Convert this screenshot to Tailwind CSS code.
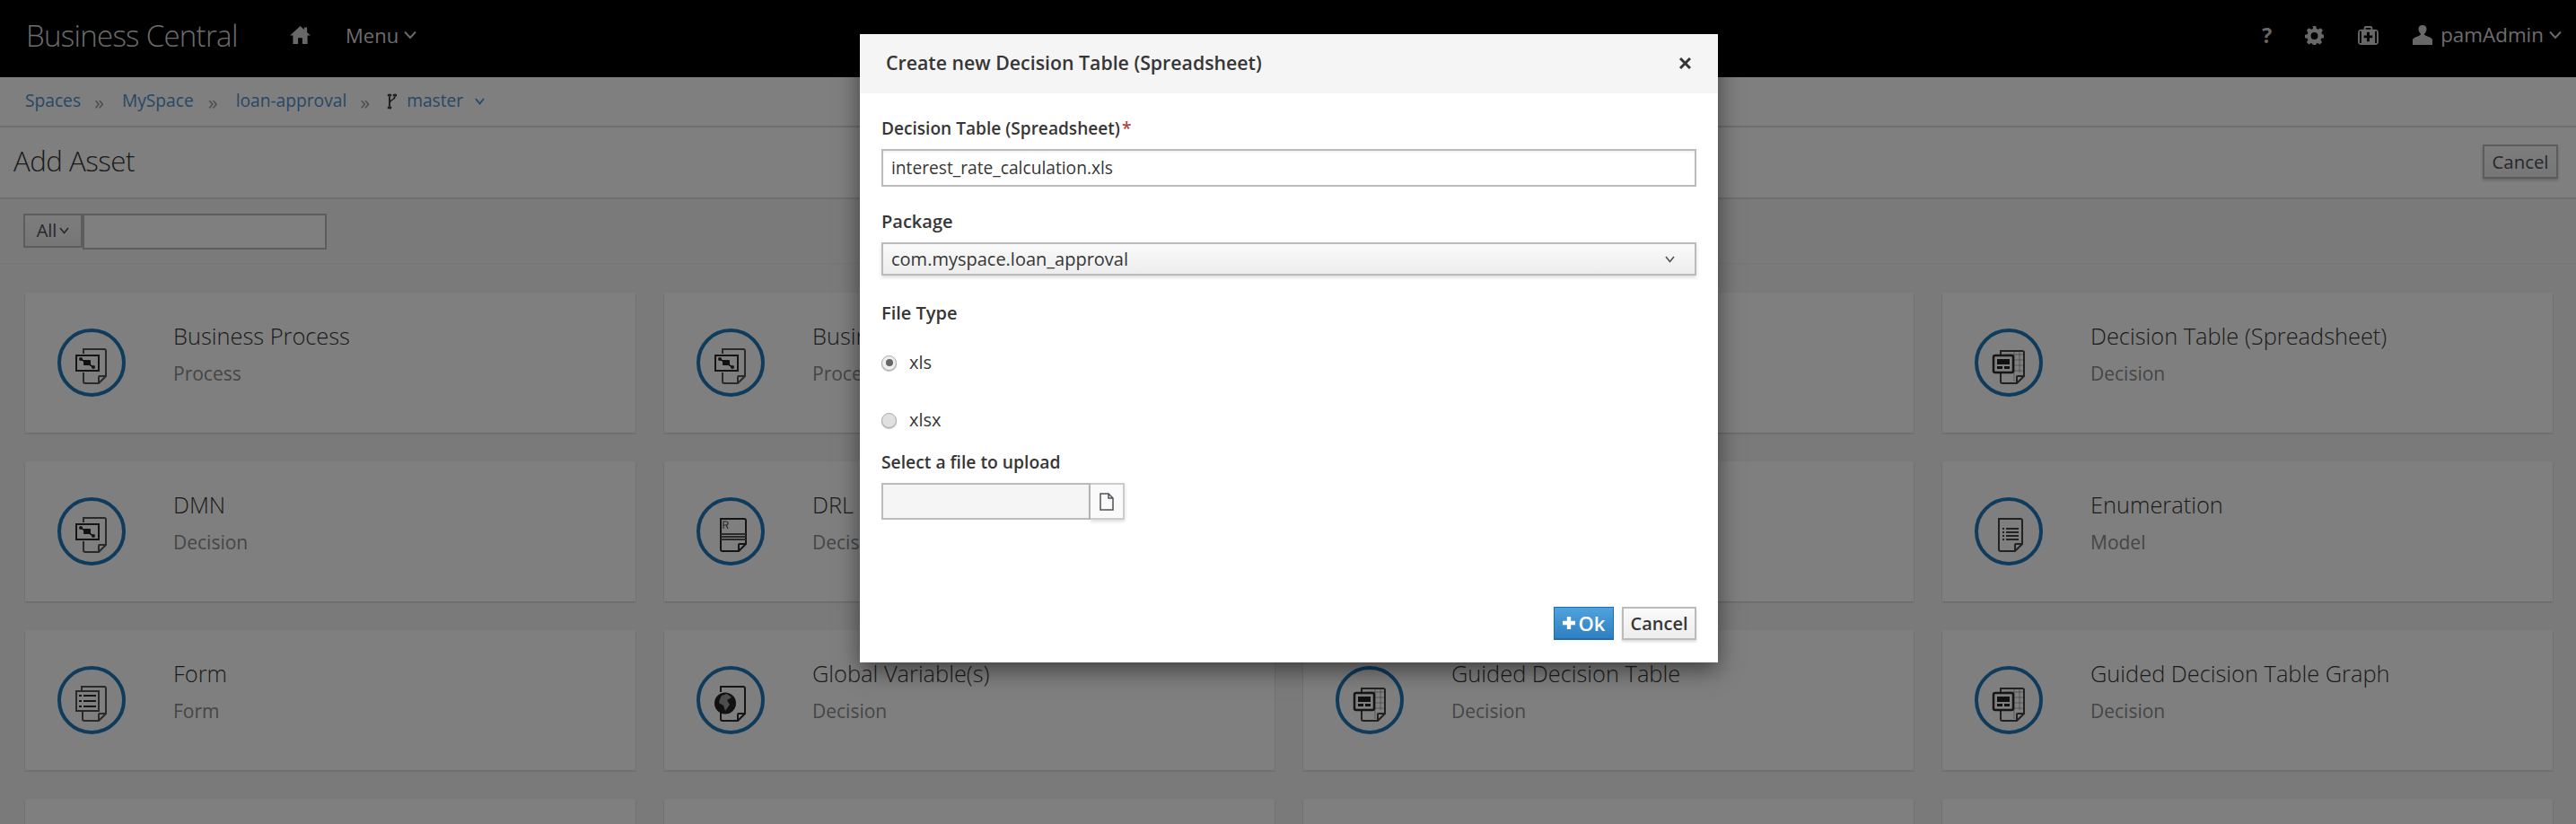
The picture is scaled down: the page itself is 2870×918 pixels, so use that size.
<!DOCTYPE html>
<html lang="en">
<head>
<meta charset="utf-8">
<title>Business Central</title>
<script src="https://cdn.jsdelivr.net/npm/@tailwindcss/browser@4"></script>
</head>
<body class="relative w-[2870px] h-[918px] overflow-hidden bg-[#f5f5f5] font-['Open_Sans',sans-serif] text-[#363636]">
<svg class="hidden" width="0" height="0">
  <defs>
    <symbol id="ic-process" viewBox="0 0 76 76">
      <path d="M29 28v-5h23a2 2 0 0 1 2 2v28l-8 8H31a2 2 0 0 1-2-2v-10" fill="none" stroke="#555" stroke-width="2"/>
      <path d="M54 53h-7a1 1 0 0 0-1 1v7" fill="none" stroke="#555" stroke-width="2"/>
      <rect x="21" y="30" width="25" height="17" fill="#fff" stroke="#2a2a2a" stroke-width="2"/>
      <path d="M26 34l14 9" stroke="#2a2a2a" stroke-width="1.500"/>
      <circle cx="26" cy="34" r="2" fill="#2a2a2a"/>
      <circle cx="40" cy="43" r="2" fill="#2a2a2a"/>
      <rect x="29" y="35" width="8" height="6" rx="1" fill="#222"/>
    </symbol>
    <symbol id="ic-drl" viewBox="0 0 76 76">
      <path d="M27 24h26a2 2 0 0 1 2 2v26l-8 8H29a2 2 0 0 1-2-2z" fill="none" stroke="#2a2a2a" stroke-width="2"/>
      <path d="M55 52h-7a1 1 0 0 0-1 1v7" fill="none" stroke="#2a2a2a" stroke-width="2"/>
      <path d="M30 35v-8h3a2 2 0 0 1 0 4h-3m3 0l2 4" fill="none" stroke="#555" stroke-width="1.200"/>
      <path d="M27 41h28M27 44h28M27 47h28" stroke="#555" stroke-width="2"/>
    </symbol>
    <symbol id="ic-table" viewBox="0 0 76 76">
      <path d="M34 29h20M44 25v34M44 35h10M44 41h10M44 47h10M50 25v24" stroke="#777" stroke-width="0.600"/>
      <path d="M29 29v-4h24a2 2 0 0 1 2 2v26l-8 8H31a2 2 0 0 1-2-2v-9" fill="none" stroke="#444" stroke-width="2"/>
      <path d="M55 53h-7a1 1 0 0 0-1 1v7" fill="none" stroke="#444" stroke-width="2"/>
      <rect x="21" y="30" width="22" height="19" rx="2" fill="#fff" stroke="#2a2a2a" stroke-width="2.500"/>
      <rect x="25" y="34" width="14" height="6" fill="#222"/>
      <rect x="25" y="42" width="6" height="3" fill="#222"/>
      <rect x="33" y="42" width="6" height="3" fill="#222"/>
    </symbol>
    <symbol id="ic-enum" viewBox="0 0 76 76">
      <path d="M27 24h24a2 2 0 0 1 2 2v26l-8 8H29a2 2 0 0 1-2-2z" fill="none" stroke="#444" stroke-width="2"/>
      <path d="M53 52h-7a1 1 0 0 0-1 1v7" fill="none" stroke="#444" stroke-width="2"/>
      <path d="M31 35h2M31 39h2M31 43h2M31 47h2" stroke="#444" stroke-width="2"/>
      <path d="M35 35h14M35 39h14M35 43h14M35 47h14" stroke="#444" stroke-width="2"/>
    </symbol>
    <symbol id="ic-form" viewBox="0 0 76 76">
      <path d="M27 28v-5h25a2 2 0 0 1 2 2v28l-8 8H30a2 2 0 0 1-2-2v-9" fill="none" stroke="#555" stroke-width="2"/>
      <path d="M54 53h-7a1 1 0 0 0-1 1v7" fill="none" stroke="#555" stroke-width="2"/>
      <rect x="21" y="28" width="25" height="22" fill="#fff" stroke="#555" stroke-width="2"/>
      <path d="M24 33h3M24 39h3M24 45h3" stroke="#2a2a2a" stroke-width="2"/>
      <path d="M29 33h14M29 39h14M29 45h14" stroke="#2a2a2a" stroke-width="2"/>
    </symbol>
    <symbol id="ic-globe" viewBox="0 0 76 76">
      <path d="M27 29v-6h25a2 2 0 0 1 2 2v28l-8 8H29a2 2 0 0 1-2-2v-7" fill="none" stroke="#2a2a2a" stroke-width="2"/>
      <path d="M54 53h-7a1 1 0 0 0-1 1v7" fill="none" stroke="#2a2a2a" stroke-width="2"/>
      <circle cx="32" cy="41.500" r="12" fill="#222"/>
      <path d="M28 33l6-2 5 4-5 3 3 5-5 7-2-6-5-3 1-4z" fill="#fff" fill-opacity=".55"/>
    </symbol>
  </defs>
</svg>

<header class="h-[86px] bg-black pb-2 flex items-center text-[#d8d8d8]">
  <span class="ml-[29px] w-[234px] text-[33px] leading-none font-light tracking-[-0.7px] whitespace-nowrap">Business Central</span>
  <svg class="ml-[60px] w-[23px] h-[20px]" viewBox="0 0 24 21" fill="#d0d0d0"><path d="M12 0 0 11h3.500v10h6v-7h5v7h6V11H24L20 7.300V1.500h-3.500v2.600z"/></svg>
  <span class="ml-[39px] text-[22px] leading-none">Menu</span>
  <svg class="ml-[6px] w-[14px] h-[10px]" viewBox="0 0 14 10" fill="none" stroke="#d0d0d0" stroke-width="2"><path d="M1 1.500l6 6.500 6-6.500"/></svg>
  <div class="ml-auto flex items-center">
    <span class="text-[23px] leading-none font-bold text-[#d0d0d0]">?</span>
    <svg class="ml-[37px] w-[21px] h-[21px]" viewBox="0 0 24 24" fill="#d0d0d0" fill-rule="evenodd"><path d="M10 0h4l.7 3.400 2.200.9L20 2.500l2.800 2.800L21 8.300l.9 2.200L24 11v4l-3.100.6-.9 2.200 1.800 2.900L19 23.500l-2.900-1.800-1.800.8L14 24h-4l-.4-1.500-1.800-.8L4.900 23.500 2.200 20.700 4 17.800l-.9-2.200L0 15v-4l3.100-.5.9-2.200L2.200 5.300 5 2.500l3.100 1.800 2.200-.9zM12 8a4.500 4.500 0 1 0 0 9 4.500 4.500 0 0 0 0-9z"/></svg>
    <svg class="ml-[38px] w-[23px] h-[21px]" viewBox="0 0 24 22" fill="#d0d0d0" fill-rule="evenodd"><path d="M7 4V2a2 2 0 0 1 2-2h6a2 2 0 0 1 2 2v2h3a4 4 0 0 1 4 4v10a4 4 0 0 1-4 4H4a4 4 0 0 1-4-4V8a4 4 0 0 1 4-4zM9 2v2h6V2zM2 6v14h2V6zM20 6v14h2V6zM10.500 7v4H7v3h3.500v4h3v-4H17v-3h-3.500V7z"/></svg>
    <svg class="ml-[38px] w-[22px] h-[22px]" viewBox="0 0 22 32" preserveAspectRatio="none" fill="#d0d0d0"><path d="M11 0c3 0 4.500 2.500 4.500 6 0 3-1 6-2.500 8 0 2 1.500 3 4 4.500 3 1.500 5 3 5 5.500v8H0v-8c0-2.500 2-4 5-5.500 2.500-1.500 4-2.500 4-4.500C7.500 12 6.500 9 6.500 6 6.500 2.500 8 0 11 0z"/></svg>
    <span class="ml-[9px] text-[22.400px] leading-none">pamAdmin</span>
    <svg class="ml-[6px] mr-[16px] w-[14px] h-[10px]" viewBox="0 0 14 10" fill="none" stroke="#d0d0d0" stroke-width="2"><path d="M1 1.500l6 6.500 6-6.500"/></svg>
  </div>
</header>

<nav class="h-[56px] bg-white border-b-2 border-[#dcdcdc] pl-[28px] pb-[1px] flex items-center text-[19.200px] text-[#4f90c9]">
  <span>Spaces</span>
  <span class="ml-[15px] text-[22px] leading-none text-[#9a9a9a]">»</span>
  <span class="ml-[20px]">MySpace</span>
  <span class="ml-[16px] text-[22px] leading-none text-[#9a9a9a]">»</span>
  <span class="ml-[20px]">loan-approval</span>
  <span class="ml-[15px] text-[22px] leading-none text-[#9a9a9a]">»</span>
  <svg class="ml-[19px] w-[11px] h-[18px]" viewBox="0 0 11 26" preserveAspectRatio="none" fill="none" stroke="#333" stroke-width="1.800"><circle cx="3" cy="3" r="1.500"/><circle cx="9" cy="3" r="1.500"/><circle cx="3" cy="23" r="1.500"/><path d="M3 5v16M9 5c0 5-6 6-6 10"/></svg>
  <span class="ml-[11px]">master</span>
  <svg class="ml-[13px] w-[11px] h-[8px]" viewBox="0 0 11 8" fill="none" stroke="#4f90c9" stroke-width="1.800"><path d="M1 1l4.500 5.500L10 1"/></svg>
</nav>

<div class="h-[80px] bg-white border-b-2 border-[#dcdcdc] pl-[15px] pr-[20px] pb-[2px] flex items-center justify-between">
  <h1 class="text-[31.200px] leading-none font-light tracking-[-0.5px]">Add Asset</h1>
  <button class="w-[84px] h-[38px] border-2 border-[#bbb] bg-gradient-to-b from-[#fafafa] to-[#ededed] text-[20.400px] leading-none text-[#4d5258] shadow-[0_2px_3px_rgba(0,0,0,.2)]">Cancel</button>
</div>

<div class="h-[72px] border-b border-[#ececec] pl-[26px] pt-[16px] flex items-start">
  <button class="w-[66px] h-[38px] border-2 border-[#bbb] bg-gradient-to-b from-[#fafafa] to-[#ededed] flex items-center justify-center gap-[3px] text-[20px] leading-none text-[#4d5258]">All<svg class="w-[11px] h-[8px]" viewBox="0 0 11 8" fill="none" stroke="#4d5258" stroke-width="1.600"><path d="M1 1l4.500 5.500L10 1"/></svg></button>
  <div class="w-[272px] h-[40px] border-2 border-[#bbb] bg-white"></div>
</div>

<main class="pt-[32px] pl-[28px] grid grid-cols-[repeat(4,680px)] gap-x-[32px] gap-y-[32px]">
  <article class="h-[156px] bg-white shadow-[0_1px_2px_rgba(0,0,0,.2)] pl-[36px] pt-[31px] flex">
    <div class="mt-[9px] w-[76px] h-[76px] rounded-full border-[4px] border-[#1f78b8]"><svg class="-m-[4px] w-[76px] h-[76px]"><use href="#ic-process"/></svg></div>
    <div class="ml-[53px]"><h2 class="text-[25.400px] leading-[34px] font-light">Business Process</h2><p class="mt-[10px] text-[21px] leading-[30px] text-[#8b8d8f]">Process</p></div>
  </article>
  <article class="h-[156px] bg-white shadow-[0_1px_2px_rgba(0,0,0,.2)] pl-[36px] pt-[31px] flex">
    <div class="mt-[9px] w-[76px] h-[76px] rounded-full border-[4px] border-[#1f78b8]"><svg class="-m-[4px] w-[76px] h-[76px]"><use href="#ic-process"/></svg></div>
    <div class="ml-[53px] w-[53px] overflow-hidden"><h2 class="text-[25.400px] leading-[34px] font-light whitespace-nowrap">Business Process</h2><p class="mt-[10px] text-[21px] leading-[30px] text-[#8b8d8f]">Process</p></div>
  </article>
  <article class="h-[156px] bg-white shadow-[0_1px_2px_rgba(0,0,0,.2)]"></article>
  <article class="h-[156px] bg-white shadow-[0_1px_2px_rgba(0,0,0,.2)] pl-[36px] pt-[31px] flex">
    <div class="mt-[9px] w-[76px] h-[76px] rounded-full border-[4px] border-[#1f78b8]"><svg class="-m-[4px] w-[76px] h-[76px]"><use href="#ic-table"/></svg></div>
    <div class="ml-[53px]"><h2 class="text-[25.400px] leading-[34px] font-light">Decision Table (Spreadsheet)</h2><p class="mt-[10px] text-[21px] leading-[30px] text-[#8b8d8f]">Decision</p></div>
  </article>

  <article class="h-[156px] bg-white shadow-[0_1px_2px_rgba(0,0,0,.2)] pl-[36px] pt-[31px] flex">
    <div class="mt-[9px] w-[76px] h-[76px] rounded-full border-[4px] border-[#1f78b8]"><svg class="-m-[4px] w-[76px] h-[76px]"><use href="#ic-process"/></svg></div>
    <div class="ml-[53px]"><h2 class="text-[25.400px] leading-[34px] font-light">DMN</h2><p class="mt-[10px] text-[21px] leading-[30px] text-[#8b8d8f]">Decision</p></div>
  </article>
  <article class="h-[156px] bg-white shadow-[0_1px_2px_rgba(0,0,0,.2)] pl-[36px] pt-[31px] flex">
    <div class="mt-[9px] w-[76px] h-[76px] rounded-full border-[4px] border-[#1f78b8]"><svg class="-m-[4px] w-[76px] h-[76px]"><use href="#ic-drl"/></svg></div>
    <div class="ml-[53px] w-[53px] overflow-hidden"><h2 class="text-[25.400px] leading-[34px] font-light">DRL</h2><p class="mt-[10px] text-[21px] leading-[30px] text-[#8b8d8f]">Decision</p></div>
  </article>
  <article class="h-[156px] bg-white shadow-[0_1px_2px_rgba(0,0,0,.2)]"></article>
  <article class="h-[156px] bg-white shadow-[0_1px_2px_rgba(0,0,0,.2)] pl-[36px] pt-[31px] flex">
    <div class="mt-[9px] w-[76px] h-[76px] rounded-full border-[4px] border-[#1f78b8]"><svg class="-m-[4px] w-[76px] h-[76px]"><use href="#ic-enum"/></svg></div>
    <div class="ml-[53px]"><h2 class="text-[25.400px] leading-[34px] font-light">Enumeration</h2><p class="mt-[10px] text-[21px] leading-[30px] text-[#8b8d8f]">Model</p></div>
  </article>

  <article class="h-[156px] bg-white shadow-[0_1px_2px_rgba(0,0,0,.2)] pl-[36px] pt-[31px] flex">
    <div class="mt-[9px] w-[76px] h-[76px] rounded-full border-[4px] border-[#1f78b8]"><svg class="-m-[4px] w-[76px] h-[76px]"><use href="#ic-form"/></svg></div>
    <div class="ml-[53px]"><h2 class="text-[25.400px] leading-[34px] font-light">Form</h2><p class="mt-[10px] text-[21px] leading-[30px] text-[#8b8d8f]">Form</p></div>
  </article>
  <article class="h-[156px] bg-white shadow-[0_1px_2px_rgba(0,0,0,.2)] pl-[36px] pt-[31px] flex">
    <div class="mt-[9px] w-[76px] h-[76px] rounded-full border-[4px] border-[#1f78b8]"><svg class="-m-[4px] w-[76px] h-[76px]"><use href="#ic-globe"/></svg></div>
    <div class="ml-[53px]"><h2 class="text-[25.400px] leading-[34px] font-light">Global Variable(s)</h2><p class="mt-[10px] text-[21px] leading-[30px] text-[#8b8d8f]">Decision</p></div>
  </article>
  <article class="h-[156px] bg-white shadow-[0_1px_2px_rgba(0,0,0,.2)] pl-[36px] pt-[31px] flex">
    <div class="mt-[9px] w-[76px] h-[76px] rounded-full border-[4px] border-[#1f78b8]"><svg class="-m-[4px] w-[76px] h-[76px]"><use href="#ic-table"/></svg></div>
    <div class="ml-[53px]"><h2 class="text-[25.400px] leading-[34px] font-light">Guided Decision Table</h2><p class="mt-[10px] text-[21px] leading-[30px] text-[#8b8d8f]">Decision</p></div>
  </article>
  <article class="h-[156px] bg-white shadow-[0_1px_2px_rgba(0,0,0,.2)] pl-[36px] pt-[31px] flex">
    <div class="mt-[9px] w-[76px] h-[76px] rounded-full border-[4px] border-[#1f78b8]"><svg class="-m-[4px] w-[76px] h-[76px]"><use href="#ic-table"/></svg></div>
    <div class="ml-[53px]"><h2 class="text-[25.400px] leading-[34px] font-light">Guided Decision Table Graph</h2><p class="mt-[10px] text-[21px] leading-[30px] text-[#8b8d8f]">Decision</p></div>
  </article>

  <article class="h-[156px] bg-white shadow-[0_1px_2px_rgba(0,0,0,.2)]"></article>
  <article class="h-[156px] bg-white shadow-[0_1px_2px_rgba(0,0,0,.2)]"></article>
  <article class="h-[156px] bg-white shadow-[0_1px_2px_rgba(0,0,0,.2)]"></article>
  <article class="h-[156px] bg-white shadow-[0_1px_2px_rgba(0,0,0,.2)]"></article>
</main>

<div class="absolute inset-0 bg-black/50"></div>

<section class="absolute left-[958px] top-[38px] w-[956px] h-[700px] bg-white flex flex-col shadow-[0_8px_24px_rgba(0,0,0,.5)]">
  <div class="h-[66px] shrink-0 bg-[#f5f5f5] pl-[29px] pr-[30px] pb-[2px] flex items-center justify-between">
    <h3 class="text-[21.300px] leading-none font-semibold">Create new Decision Table (Spreadsheet)</h3>
    <svg class="w-[13px] h-[13px]" viewBox="0 0 13 13" stroke="#363636" stroke-width="3"><path d="M1 1l11 11M12 1L1 12"/></svg>
  </div>
  <div class="flex-1 px-[24px] pt-[24px] pb-[25px] flex flex-col text-[20px]">
    <label class="h-[30px] text-[19.100px] leading-[30px] font-semibold">Decision Table (Spreadsheet)<span class="ml-[2px] text-[#b04040]">*</span></label>
    <div class="mt-[8px] h-[42px] shrink-0 border-2 border-[#bbb] pl-[9px] text-[19.200px] flex items-center shadow-[inset_0_2px_2px_rgba(0,0,0,.05)]">interest_rate_calculation.xls</div>
    <label class="mt-[24px] h-[30px] leading-[30px] font-semibold">Package</label>
    <div class="mt-[8px] h-[37px] shrink-0 border-2 border-[#bbb] pl-[9px] pr-[22px] flex items-center justify-between bg-gradient-to-b from-[#fafafa] to-[#ededed] shadow-[0_2px_4px_rgba(0,0,0,.15)]">
      <span>com.myspace.loan_approval</span>
      <svg class="w-[11px] h-[8px]" viewBox="0 0 11 8" fill="none" stroke="#4d5258" stroke-width="1.600"><path d="M1 1l4.500 5.500L10 1"/></svg>
    </div>
    <label class="mt-[27px] h-[30px] leading-[30px] font-semibold">File Type</label>
    <div class="mt-[25px] h-[30px] flex items-center">
      <span class="w-[17px] h-[17px] rounded-full border border-[#aaa] bg-[#eee] flex items-center justify-center shadow-[0_1px_1px_rgba(0,0,0,.25)]"><span class="w-[8px] h-[8px] rounded-full bg-[#666]"></span></span>
      <span class="ml-[14px]">xls</span>
    </div>
    <div class="mt-[34px] h-[30px] flex items-center">
      <span class="w-[17px] h-[17px] rounded-full border border-[#aaa] bg-[#e0e0e0] shadow-[0_1px_1px_rgba(0,0,0,.25)]"></span>
      <span class="ml-[14px]">xlsx</span>
    </div>
    <label class="mt-[17px] h-[30px] text-[19.300px] leading-[30px] font-semibold">Select a file to upload</label>
    <div class="mt-[8px] h-[41px] w-[271px] flex">
      <div class="w-[233px] border-2 border-[#bbb] bg-[#f5f5f5]"></div>
      <div class="w-[38px] border-2 border-l-0 border-[#ccc] bg-[#fafafa] flex items-center justify-center shadow-[0_2px_4px_rgba(0,0,0,.15)]">
        <svg class="w-[16px] h-[20px]" viewBox="0 0 16 20" fill="none" stroke="#4d5258" stroke-width="1.500"><path d="M1 1h9l5 5v13H1zM10 1v5h5"/></svg>
      </div>
    </div>
    <div class="mt-auto flex justify-end gap-[9px]">
      <button class="w-[67px] h-[37px] border border-[#1f6cae] border-b-2 bg-gradient-to-b from-[#4fa3dc] to-[#2d7fc2] text-white font-semibold text-[22px] leading-none flex items-center justify-center gap-[4px]"><svg class="w-[14px] h-[14px]" viewBox="0 0 13 13" stroke="#fff" stroke-width="4"><path d="M6.500 0v13M0 6.500h13"/></svg>Ok</button>
      <button class="w-[83px] h-[37px] border-2 border-[#bbb] bg-gradient-to-b from-[#fafafa] to-[#ededed] text-[#363636] font-semibold text-[20px] leading-none shadow-[0_2px_3px_rgba(0,0,0,.15)]">Cancel</button>
    </div>
  </div>
</section>
</body>
</html>
